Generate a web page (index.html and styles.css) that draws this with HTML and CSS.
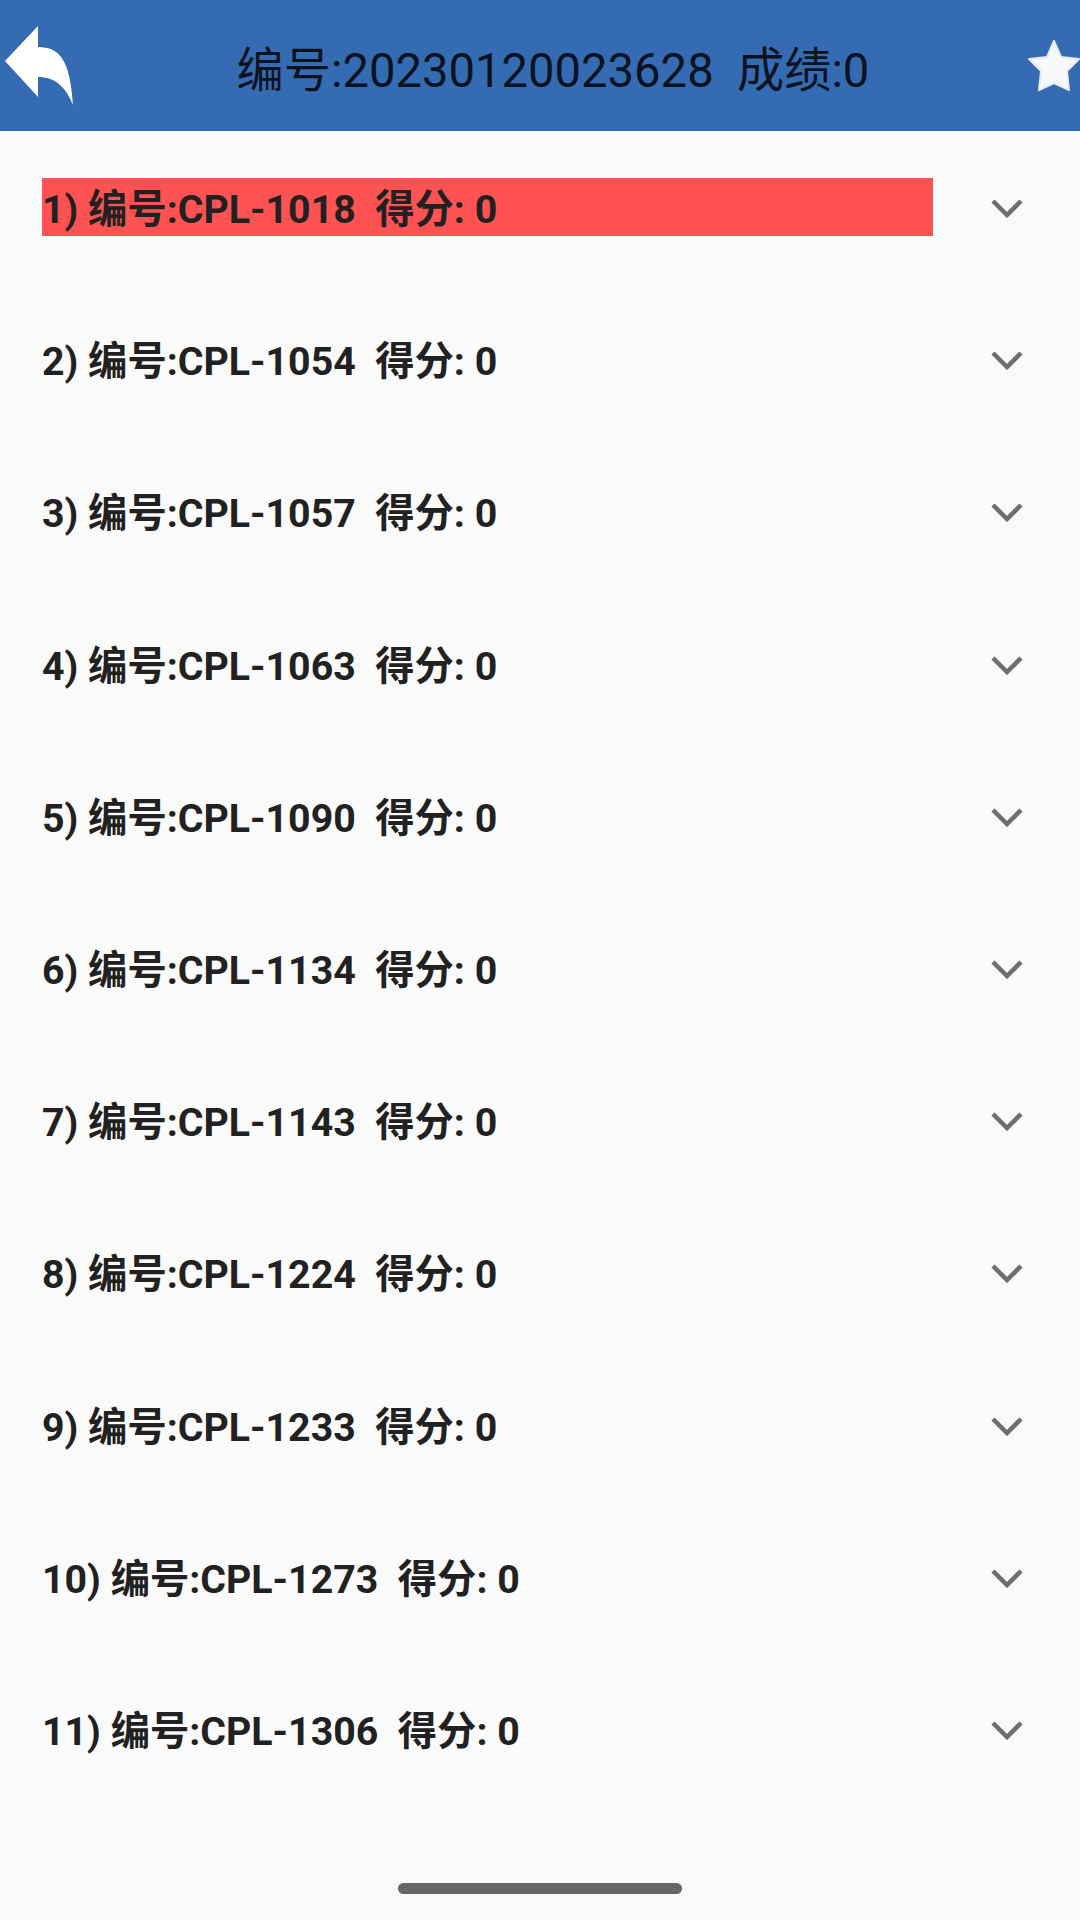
FILE: index.html
```html
<!DOCTYPE html>
<html lang="zh">
<head>
    <meta charset="UTF-8">
    <meta name="viewport" content="width=device-width, initial-scale=1.0">
    <title>成绩</title>
    <link rel="stylesheet" href="styles.css">
</head>
<body>
    <header class="topbar">
        <svg class="back-icon" viewBox="0 0 80 110">
            <path d="M5 61 L38 26 V47 C60 47 70 60 73 105 C66 87 55 77 38 77 V97 Z"/>
        </svg>
        <h1 class="title">编号:20230120023628  成绩:0</h1>
        <svg class="star-icon" viewBox="0 0 54 56">
            <path d="M28 3 L35 19 L53 21 L41 33 L43 52 L28 45 L13 52 L15 33 L3 21 L21 19 Z"/>
        </svg>
    </header>

    <main class="list">
        <div class="row"><span class="label label-wrong">1) 编号:CPL-1018  得分: 0</span><svg class="chevron" viewBox="0 0 32 20"><path d="M2 3 L16 17 L30 3"/></svg></div>
        <div class="row"><span class="label">2) 编号:CPL-1054  得分: 0</span><svg class="chevron" viewBox="0 0 32 20"><path d="M2 3 L16 17 L30 3"/></svg></div>
        <div class="row"><span class="label">3) 编号:CPL-1057  得分: 0</span><svg class="chevron" viewBox="0 0 32 20"><path d="M2 3 L16 17 L30 3"/></svg></div>
        <div class="row"><span class="label">4) 编号:CPL-1063  得分: 0</span><svg class="chevron" viewBox="0 0 32 20"><path d="M2 3 L16 17 L30 3"/></svg></div>
        <div class="row"><span class="label">5) 编号:CPL-1090  得分: 0</span><svg class="chevron" viewBox="0 0 32 20"><path d="M2 3 L16 17 L30 3"/></svg></div>
        <div class="row"><span class="label">6) 编号:CPL-1134  得分: 0</span><svg class="chevron" viewBox="0 0 32 20"><path d="M2 3 L16 17 L30 3"/></svg></div>
        <div class="row"><span class="label">7) 编号:CPL-1143  得分: 0</span><svg class="chevron" viewBox="0 0 32 20"><path d="M2 3 L16 17 L30 3"/></svg></div>
        <div class="row"><span class="label">8) 编号:CPL-1224  得分: 0</span><svg class="chevron" viewBox="0 0 32 20"><path d="M2 3 L16 17 L30 3"/></svg></div>
        <div class="row"><span class="label">9) 编号:CPL-1233  得分: 0</span><svg class="chevron" viewBox="0 0 32 20"><path d="M2 3 L16 17 L30 3"/></svg></div>
        <div class="row"><span class="label">10) 编号:CPL-1273  得分: 0</span><svg class="chevron" viewBox="0 0 32 20"><path d="M2 3 L16 17 L30 3"/></svg></div>
        <div class="row"><span class="label">11) 编号:CPL-1306  得分: 0</span><svg class="chevron" viewBox="0 0 32 20"><path d="M2 3 L16 17 L30 3"/></svg></div>
    </main>

    <div class="home-bar"></div>
</body>
</html>
```

FILE: styles.css
```css
*{
    box-sizing: border-box;
    padding: 0;
    margin: 0;
}

body{
    width: 1080px;
    height: 1920px;
    overflow: hidden;
    background-color: #fafafa;
    font-family: Roboto, "Noto Sans CJK SC", sans-serif;
}

.topbar{
    height: 131px;
    display: flex;
    align-items: flex-start;
    background-color: #356bb2;
    border-bottom: 1px solid #2f66b4;
}

.back-icon{
    width: 80px;
    height: 110px;
    flex-shrink: 0;
    fill: #fff;
}

.title{
    flex: 1;
    margin-top: 41px;
    font-size: 47.2px;
    line-height: 60px;
    font-weight: 400;
    text-align: center;
    white-space: pre;
    color: #0b1320;
}

.star-icon{
    width: 54px;
    height: 56px;
    margin-top: 38px;
    flex-shrink: 0;
    fill: #f7f8fa;
    stroke: #e8ecf2;
    stroke-width: 2;
    stroke-linejoin: round;
    filter: blur(0.7px);
}

.list{
    display: flex;
    flex-direction: column;
}

.row{
    height: 152.2px;
    padding: 47px 0 0 42px;
    display: flex;
    align-items: flex-start;
}

.label{
    width: 891px;
    height: 58px;
    font-size: 39.3px;
    line-height: 65px;
    font-weight: 700;
    white-space: pre;
    color: #212121;
}

.label-wrong{
    background-color: #ff5252;
}

.chevron{
    width: 32px;
    height: 20px;
    margin: 20px 0 0 58px;
    fill: none;
    stroke: #6e6e6e;
    stroke-width: 4.5;
}

.home-bar{
    width: 284px;
    height: 11px;
    margin: 78px auto 0;
    border-radius: 6px;
    background-color: #666;
}
```
